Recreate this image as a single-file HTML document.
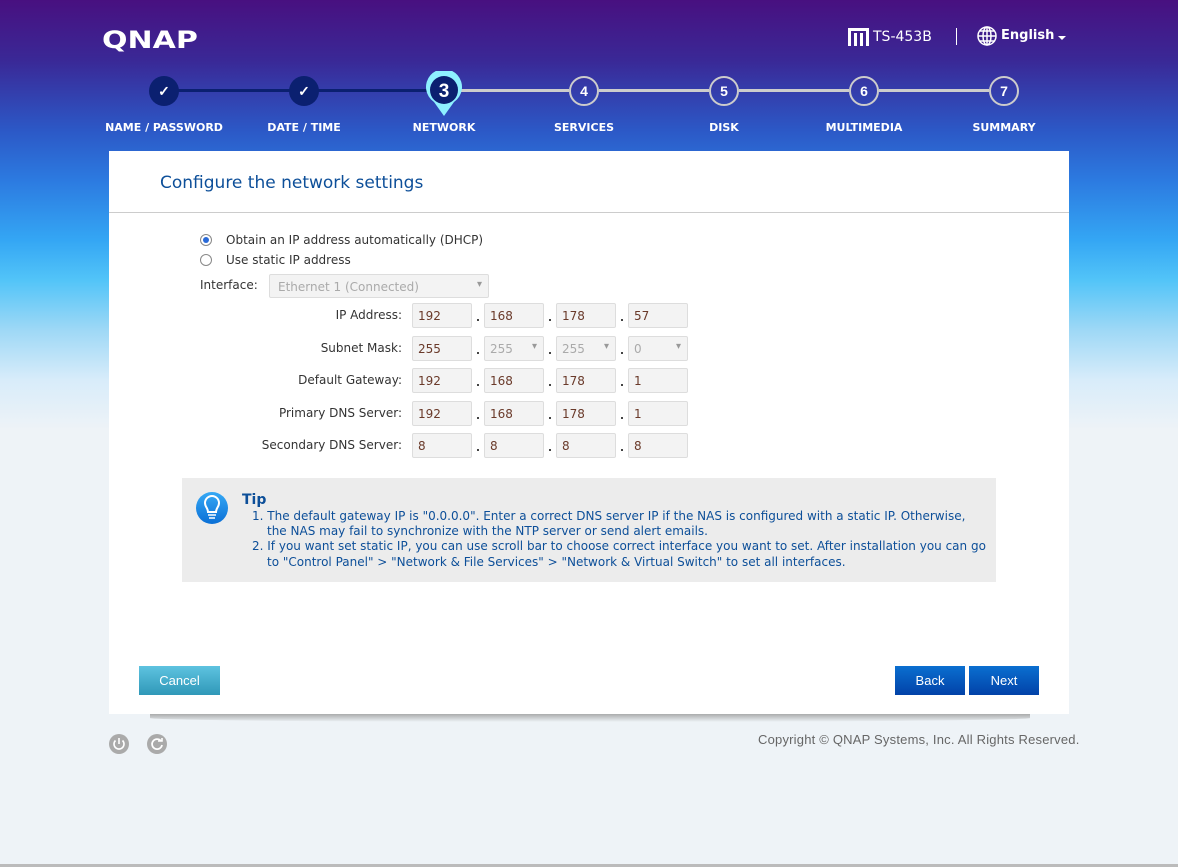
<!DOCTYPE html>
<html><head><meta charset="utf-8"><style>
*{margin:0;padding:0;box-sizing:border-box}
body{width:1178px;height:867px;overflow:hidden;position:relative;font-family:"DejaVu Sans","Liberation Sans",sans-serif;
background:linear-gradient(180deg,#481080 0px,#3a2896 60px,#2c58c6 130px,#2c7ae0 180px,#34a6f4 240px,#52c4f8 280px,#9ed8f6 330px,#d8ecfa 380px,#eef3f7 430px,#eef3f7 100%)}
.abs{position:absolute}
.logo{left:102px;top:26px;color:#fff;font:900 24px "DejaVu Sans",sans-serif;letter-spacing:0px;transform:scaleX(1.25);transform-origin:left}
.hd{color:#fff;font-size:14px}
.step{position:absolute;width:30px;height:30px;border-radius:50%;top:76px;color:#fff;font:bold 14px "Liberation Sans",sans-serif;text-align:center;line-height:26px}
.done{background:#0b2070;line-height:30px}
.fut{border:2px solid #ccc}
.lbl{position:absolute;top:121px;color:#fff;font:bold 11px "DejaVu Sans",sans-serif;width:160px;text-align:center}
.line{position:absolute;top:89px;height:3px}
.card{left:109px;top:151px;width:960px;height:563px;background:#fff}
.title{left:160px;top:173px;font-size:17px;color:#0d4f99}
.t{font-size:12px;color:#333}
.box{position:absolute;width:60px;height:25px;border:1px solid #ddd;background:#f3f3f3;border-radius:2px;font-size:12px;color:#6a3a2a;padding:5px 0 0 5px}
.dis{color:#aaa}
.dis:after{content:"▾";position:absolute;right:6px;top:4px;font-size:10px;color:#999}
.rl{position:absolute;width:200px;text-align:right;font-size:12px;color:#333}
.d{position:absolute;width:2px;height:2px;background:#444}
.btn{position:absolute;top:666px;height:29px;color:#fff;font:13px "Liberation Sans",sans-serif;text-align:center;line-height:29px}
</style></head><body>
<div class="abs logo">QNAP</div>
<svg class="abs" style="left:848px;top:28px" width="21" height="18"><rect x="0" y="0" width="21" height="3" fill="#fff"/><rect x="0" y="3" width="3" height="15" fill="#fff"/><rect x="6" y="5" width="3" height="13" fill="#fff"/><rect x="12" y="5" width="3" height="13" fill="#fff"/><rect x="18" y="3" width="3" height="15" fill="#fff"/></svg>
<div class="abs hd" style="left:873px;top:29px">TS-453B</div>
<div class="abs" style="left:956px;top:28px;width:1px;height:17px;background:#fff"></div>
<svg class="abs" style="left:977px;top:26px" width="20" height="20" fill="none" stroke="#fff" stroke-width="1.5"><circle cx="10" cy="10" r="9"/><ellipse cx="10" cy="10" rx="4" ry="9"/><line x1="1" y1="10" x2="19" y2="10"/><line x1="10" y1="1" x2="10" y2="19"/><line x1="3" y1="5" x2="17" y2="5"/><line x1="3" y1="15" x2="17" y2="15"/></svg>
<div class="abs hd" style="left:1001px;top:28px;font-weight:bold;font-size:13px">English</div>
<div class="abs" style="left:1058px;top:36px;border:4px solid transparent;border-top:4px solid #fff"></div>

<div class="line" style="left:164px;width:280px;background:#0b2070"></div>
<div class="line" style="left:460px;width:109px;background:#ccc"></div>
<div class="line" style="left:599px;width:110px;background:#ccc"></div>
<div class="line" style="left:739px;width:110px;background:#ccc"></div>
<div class="line" style="left:879px;width:110px;background:#ccc"></div>
<div class="step done" style="left:149px">✓</div>
<div class="step done" style="left:289px">✓</div>
<svg class="abs" style="left:425px;top:71px" width="38" height="46"><path d="M19 45 L9 31 A18 18 0 1 1 29 31 Z" fill="#8ef0ff"/><circle cx="19" cy="19" r="14" fill="#0b2070"/><text x="19" y="26" text-anchor="middle" font-family="Liberation Sans" font-weight="bold" font-size="19" fill="#fff">3</text></svg>
<div class="step fut" style="left:569px">4</div>
<div class="step fut" style="left:709px">5</div>
<div class="step fut" style="left:849px">6</div>
<div class="step fut" style="left:989px">7</div>
<div class="lbl" style="left:84px">NAME / PASSWORD</div>
<div class="lbl" style="left:224px">DATE / TIME</div>
<div class="lbl" style="left:364px">NETWORK</div>
<div class="lbl" style="left:504px">SERVICES</div>
<div class="lbl" style="left:644px">DISK</div>
<div class="lbl" style="left:784px">MULTIMEDIA</div>
<div class="lbl" style="left:924px">SUMMARY</div>

<div class="abs card"></div>
<div class="abs title">Configure the network settings</div>
<div class="abs" style="left:109px;top:212px;width:960px;height:1px;background:#ccc"></div>
<svg class="abs" style="left:199px;top:234px" width="14" height="34"><circle cx="7" cy="6" r="5.5" fill="#fff" stroke="#888"/><circle cx="7" cy="6" r="3" fill="#2a6ad8"/><circle cx="7" cy="26" r="5.5" fill="#fff" stroke="#888"/></svg>
<div class="abs t" style="left:226px;top:233px">Obtain an IP address automatically (DHCP)</div>
<div class="abs t" style="left:226px;top:253px">Use static IP address</div>
<div class="abs t" style="left:200px;top:278px">Interface:</div>
<div class="box dis" style="left:269px;top:274px;width:220px;height:24px;padding-left:8px">Ethernet 1 (Connected)</div>

<div class="rl" style="left:202px;top:308px">IP Address:</div>
<div class="rl" style="left:202px;top:341px">Subnet Mask:</div>
<div class="rl" style="left:202px;top:373px">Default Gateway:</div>
<div class="rl" style="left:202px;top:406px">Primary DNS Server:</div>
<div class="rl" style="left:202px;top:438px">Secondary DNS Server:</div>

<div class="box" style="left:412px;top:303px">192</div><div class="box" style="left:484px;top:303px">168</div><div class="box" style="left:556px;top:303px">178</div><div class="box" style="left:628px;top:303px">57</div>
<div class="box" style="left:412px;top:336px">255</div><div class="box dis" style="left:484px;top:336px">255</div><div class="box dis" style="left:556px;top:336px">255</div><div class="box dis" style="left:628px;top:336px">0</div>
<div class="box" style="left:412px;top:368px">192</div><div class="box" style="left:484px;top:368px">168</div><div class="box" style="left:556px;top:368px">178</div><div class="box" style="left:628px;top:368px">1</div>
<div class="box" style="left:412px;top:401px">192</div><div class="box" style="left:484px;top:401px">168</div><div class="box" style="left:556px;top:401px">178</div><div class="box" style="left:628px;top:401px">1</div>
<div class="box" style="left:412px;top:433px">8</div><div class="box" style="left:484px;top:433px">8</div><div class="box" style="left:556px;top:433px">8</div><div class="box" style="left:628px;top:433px">8</div>

<div class="d" style="left:477px;top:319px"></div><div class="d" style="left:549px;top:319px"></div><div class="d" style="left:621px;top:319px"></div>
<div class="d" style="left:477px;top:352px"></div><div class="d" style="left:549px;top:352px"></div><div class="d" style="left:621px;top:352px"></div>
<div class="d" style="left:477px;top:384px"></div><div class="d" style="left:549px;top:384px"></div><div class="d" style="left:621px;top:384px"></div>
<div class="d" style="left:477px;top:417px"></div><div class="d" style="left:549px;top:417px"></div><div class="d" style="left:621px;top:417px"></div>
<div class="d" style="left:477px;top:449px"></div><div class="d" style="left:549px;top:449px"></div><div class="d" style="left:621px;top:449px"></div>

<div class="abs" style="left:182px;top:478px;width:814px;height:104px;background:#ececec"></div>
<svg class="abs" style="left:195px;top:491px" width="34" height="34"><defs><linearGradient id="g" x1="0" y1="0" x2="0" y2="1"><stop offset="0" stop-color="#36a9f5"/><stop offset="1" stop-color="#0a6fd6"/></linearGradient></defs><circle cx="17" cy="17" r="16" fill="url(#g)"/><path d="M13 21 C13 17 10 16 10 12 A7 7 0 0 1 24 12 C24 16 21 17 21 21 Z" fill="none" stroke="#fff" stroke-width="2"/><line x1="13" y1="24" x2="21" y2="24" stroke="#fff" stroke-width="1.5"/><line x1="14" y1="27" x2="20" y2="27" stroke="#fff" stroke-width="1.5"/></svg>
<div class="abs" style="left:242px;top:492px;font-weight:bold;font-size:14px;color:#0d4f99">Tip</div>
<div class="abs" style="left:252px;top:509px;font-size:12px;color:#0d4f99;line-height:15.2px;width:740px">
<div>1. The default gateway IP is "0.0.0.0". Enter a correct DNS server IP if the NAS is configured with a static IP. Otherwise,</div>
<div style="padding-left:15px">the NAS may fail to synchronize with the NTP server or send alert emails.</div>
<div>2. If you want set static IP, you can use scroll bar to choose correct interface you want to set. After installation you can go</div>
<div style="padding-left:15px">to "Control Panel" &gt; "Network &amp; File Services" &gt; "Network &amp; Virtual Switch" to set all interfaces.</div>
</div>

<div class="btn" style="left:139px;width:81px;background:linear-gradient(#5ec3e0,#2f98b8)">Cancel</div>
<div class="btn" style="left:895px;width:70px;background:linear-gradient(#0a6fd0,#0242a8)">Back</div>
<div class="btn" style="left:969px;width:70px;background:linear-gradient(#0a6fd0,#0242a8)">Next</div>

<div class="abs" style="left:150px;top:714px;width:880px;height:8px;background:linear-gradient(#999,rgba(200,200,200,0));border-radius:0 0 50% 50%;opacity:.8"></div>
<svg class="abs" style="left:109px;top:734px" width="60" height="20"><circle cx="10" cy="10" r="10" fill="#aaa"/><path d="M6.5 6.5 A5 5 0 1 0 13.5 6.5" fill="none" stroke="#fff" stroke-width="1.6"/><line x1="10" y1="4" x2="10" y2="10" stroke="#fff" stroke-width="1.6"/><circle cx="48" cy="10" r="10" fill="#aaa"/><path d="M52 7 A5 5 0 1 0 53 11" fill="none" stroke="#fff" stroke-width="1.8"/><path d="M49 7 L53 7 L53 4" fill="none" stroke="#fff" stroke-width="1.6"/></svg>
<div class="abs" style="left:758px;top:732px;font-size:13px;color:#666;font-family:'Liberation Sans',sans-serif;letter-spacing:0.2px">Copyright © QNAP Systems, Inc. All Rights Reserved.</div>
<div class="abs" style="left:0;top:864px;width:1178px;height:3px;background:#bbb"></div>
</body></html>
